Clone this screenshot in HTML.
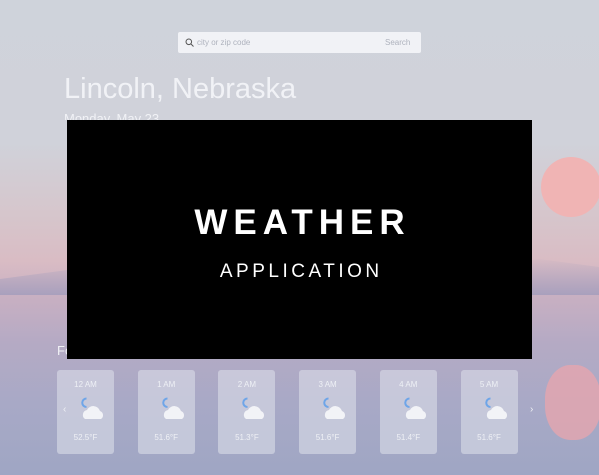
<!DOCTYPE html>
<html><head><style>
body{margin:0;width:599px;height:475px;overflow:hidden;position:relative;font-family:"Liberation Sans",sans-serif;
background:linear-gradient(180deg,#cfd3db 0%,#d0d2da 30%,#d6c6cc 45%,#d9bcc4 55%,#c9b0c2 62%,#b5aac4 72%,#a8a9c6 85%,#9fa6c4 100%);}
.a{position:absolute}
.search{left:178px;top:32px;width:243px;height:21px;background:#f1f2f6;border-radius:2px;font-size:8px;color:#aeb2bd}
.card{top:370px;width:57px;height:84px;background:rgba(218,221,231,.6);border-radius:3px;color:#eef0f5;font-size:8px;text-align:center}
.card .t{position:absolute;top:10px;width:100%}
.card .f{position:absolute;top:63px;width:100%}
</style></head><body>
<div class="a" style="left:0;top:255px;width:599px;height:40px;background:linear-gradient(180deg,rgba(120,140,190,0) ,rgba(110,130,180,.35));clip-path:polygon(0 60%,15% 30%,30% 55%,50% 70%,75% 40%,90% 10%,100% 30%,100% 100%,0 100%)"></div>
<div class="a" style="left:541px;top:157px;width:60px;height:60px;border-radius:50%;background:#f0b4b4"></div>
<div class="a" style="left:545px;top:365px;width:56px;height:75px;border-radius:45%;background:#e9a6ac;opacity:.75"></div>
<div class="a search">
<svg class="a" style="left:7px;top:6px" width="9" height="9" viewBox="0 0 9 9"><circle cx="3.8" cy="3.8" r="2.8" fill="none" stroke="#555" stroke-width="1"/><path d="M6 6l2.5 2.5" stroke="#555" stroke-width="1"/></svg>
<span class="a" style="left:19px;top:6px">city or zip code</span><span class="a" style="left:207px;top:6px">Search</span></div>
<div class="a" style="left:64px;top:73px;font-size:29px;color:#f1f2f6">Lincoln, Nebraska</div>
<div class="a" style="left:64px;top:111px;font-size:13px;color:#f1f2f6;height:9px;overflow:hidden">Monday, May 23</div>
<div class="a" style="left:57px;top:343px;font-size:13px;color:#f1f2f6">Fo</div>
<div class="a" style="left:67px;top:120px;width:465px;height:239px;background:#000;color:#fff;text-align:center">
<div class="a" style="left:0;width:100%;top:83px;font-size:35px;font-weight:bold;letter-spacing:6px;padding-left:6px;box-sizing:border-box">WEATHER</div>
<div class="a" style="left:0;width:100%;top:141px;font-size:19px;letter-spacing:3.5px;padding-left:3.5px;box-sizing:border-box">APPLICATION</div>
</div>
<div id="cards"></div>
<script>
var d=[["12 AM","52.5°F"],["1 AM","51.6°F"],["2 AM","51.3°F"],["3 AM","51.6°F"],["4 AM","51.4°F"],["5 AM","51.6°F"]],h="";
d.forEach(function(c,i){var x=57+i*80.7;h+='<div class="a card" style="left:'+x+'px"><div class="t">'+c[0]+'</div><svg class="a" style="left:22px;top:27px" width="30" height="28" viewBox="0 0 30 28"><path d="M7.5 1.5a4.2 4.2 0 0 0 0 8.5" fill="none" stroke="#6ea5e8" stroke-width="2"/><path d="M6 22a5 5 0 0 1 2-9a7 7 0 0 1 13 1a4.5 4.5 0 0 1 1 8z" fill="#f2f3f7"/></svg><div class="f">'+c[1]+'</div></div>';});
h+='<div class="a" style="left:63px;top:404px;color:#eef0f5;font-size:10px">‹</div><div class="a" style="left:530px;top:404px;color:#eef0f5;font-size:10px">›</div>';
document.getElementById("cards").innerHTML=h;
</script>
</body></html>
